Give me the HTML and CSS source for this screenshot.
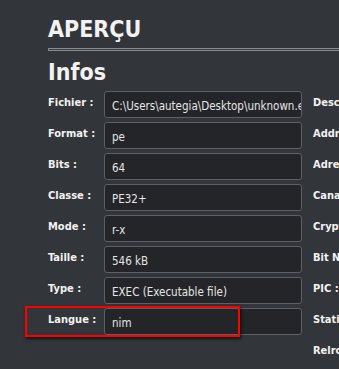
FILE: index.html
```html
<!DOCTYPE html>
<html lang="fr">
<head>
    <meta charset="UTF-8">
    <meta name="viewport" content="width=device-width, initial-scale=1.0">
    <title>Aperçu</title>
    <link rel="stylesheet" href="styles.css">
</head>
<body>

<div class="page">

    <!-- Title -->
    <h1 class="title">APERÇU</h1>
    <hr class="rule">

    <h2 class="section">Infos</h2>

    <div class="columns">

        <!-- Left column -->
        <div class="column">
            <div class="row">
                <span class="label">Fichier :</span>
                <div class="field">C:\Users\autegia\Desktop\unknown.exe</div>
            </div>
            <div class="row">
                <span class="label">Format :</span>
                <div class="field">pe</div>
            </div>
            <div class="row">
                <span class="label">Bits :</span>
                <div class="field">64</div>
            </div>
            <div class="row">
                <span class="label">Classe :</span>
                <div class="field">PE32+</div>
            </div>
            <div class="row">
                <span class="label">Mode :</span>
                <div class="field">r-x</div>
            </div>
            <div class="row">
                <span class="label">Taille :</span>
                <div class="field">546 kB</div>
            </div>
            <div class="row">
                <span class="label">Type :</span>
                <div class="field">EXEC (Executable file)</div>
            </div>
            <div class="row highlighted">
                <span class="label">Langue :</span>
                <div class="field">nim</div>
                <span class="marker"></span>
            </div>
        </div>

        <!-- Right column -->
        <div class="column">
            <div class="row"><span class="label">Description :</span><div class="field"></div></div>
            <div class="row"><span class="label">Address :</span><div class="field"></div></div>
            <div class="row"><span class="label">Adresse :</span><div class="field"></div></div>
            <div class="row"><span class="label">Canary :</span><div class="field"></div></div>
            <div class="row"><span class="label">Crypto :</span><div class="field"></div></div>
            <div class="row"><span class="label">Bit NX :</span><div class="field"></div></div>
            <div class="row"><span class="label">PIC :</span><div class="field"></div></div>
            <div class="row"><span class="label">Static :</span><div class="field"></div></div>
            <div class="row"><span class="label">Relro :</span><div class="field"></div></div>
        </div>

    </div>

</div>

</body>
</html>
```

FILE: styles.css
```css
html, body {
    margin: 0;
    overflow: hidden;
}

body {
    background-color: #323539;
    color: #f2f2f2;
    font-family: "DejaVu Sans Condensed", "DejaVu Sans", sans-serif;
    font-stretch: condensed;
}

.page {
    padding: 15px 0 0 48px;
}

.title {
    margin: 0;
    font-size: 23px;
    line-height: 28px;
    font-weight: bold;
}

.rule {
    width: 600px;
    height: 1px;
    margin: 5px 0 0 0;
    border: 1px solid #8a8c8f;
    background-color: #3a3d41;
}

.section {
    margin: 7px 0 0 0;
    font-size: 23px;
    line-height: 28px;
    font-weight: bold;
}

.columns {
    display: flex;
    gap: 11px;
    margin-top: 5px;
}

.column {
    display: flex;
    flex-direction: column;
    gap: 4px;
}

.row {
    position: relative;
    display: flex;
    height: 27px;
}

.label {
    width: 56px;
    flex-shrink: 0;
    padding-top: 5px;
    font-size: 11px;
    font-weight: bold;
    white-space: nowrap;
}

.field {
    width: 183px;
    flex-shrink: 0;
    padding: 0 6px 0 7px;
    background-color: #232528;
    border: 1px solid #5c5f63;
    border-radius: 3px;
    font-size: 11.5px;
    line-height: 28px;
    color: #e6e6e6;
    white-space: nowrap;
    overflow: hidden;
}

.column:last-child .label {
    width: 80px;
}

/* red annotation box round the language row */
.marker {
    position: absolute;
    left: -23px;
    top: -2px;
    width: 211px;
    height: 27px;
    border: 2px solid #ff0000;
    box-shadow: 1px 2px 3px rgba(0, 0, 0, 0.7);
}
```
